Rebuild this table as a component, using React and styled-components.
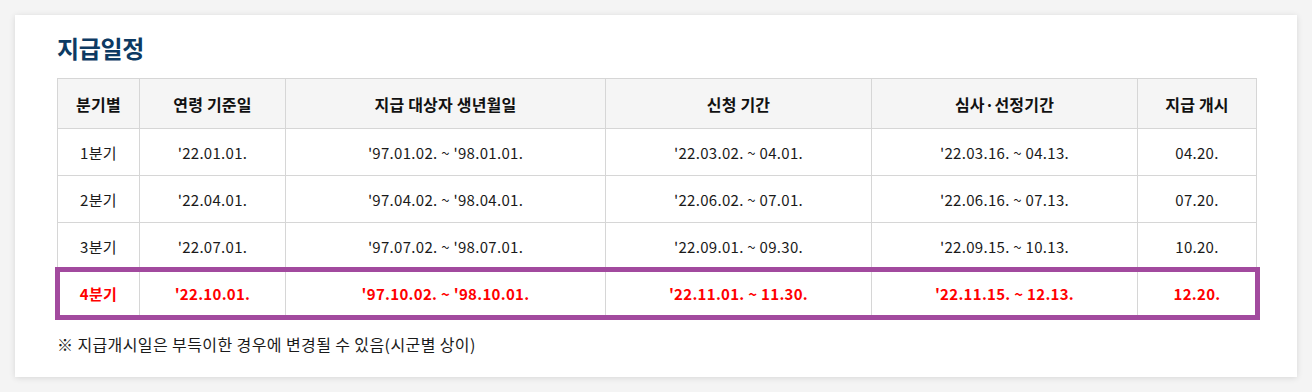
import React from "react";
import styled, { createGlobalStyle } from "styled-components";

const GlobalStyle = createGlobalStyle`
  html, body {
    margin: 0;
    padding: 0;
    background: #f4f4f4;
    font-family: "Noto Sans CJK KR", "Noto Sans", sans-serif;
  }
`;

const rows = [
  ["1분기", "'22.01.01.", "'97.01.02. ~ '98.01.01.", "'22.03.02. ~ 04.01.", "'22.03.16. ~ 04.13.", "04.20."],
  ["2분기", "'22.04.01.", "'97.04.02. ~ '98.04.01.", "'22.06.02. ~ 07.01.", "'22.06.16. ~ 07.13.", "07.20."],
  ["3분기", "'22.07.01.", "'97.07.02. ~ '98.07.01.", "'22.09.01. ~ 09.30.", "'22.09.15. ~ 10.13.", "10.20."],
  ["4분기", "'22.10.01.", "'97.10.02. ~ '98.10.01.", "'22.11.01. ~ 11.30.", "'22.11.15. ~ 12.13.", "12.20."],
];

const heads = ["분기별", "연령 기준일", "지급 대상자 생년월일", "신청 기간", "심사·선정기간", "지급 개시"];
const widths = [82, 146, 320, 266, 266, 119];

export default function App() {
  return (
    <>
      <GlobalStyle />
      <Page>
        <Card>
          <Title>지급일정</Title>
          <Table>
            <colgroup>
              {widths.map((w, i) => (
                <col key={i} style={{ width: w }} />
              ))}
            </colgroup>
            <thead>
              <tr>
                {heads.map((h) => (
                  <Th key={h}>{h}</Th>
                ))}
              </tr>
            </thead>
            <tbody>
              {rows.map((r, i) => (
                <Row key={i} $current={i === 3}>
                  {r.map((c, j) => (
                    <Td key={j} $current={i === 3}>{c}</Td>
                  ))}
                </Row>
              ))}
            </tbody>
          </Table>
          <Note>※ 지급개시일은 부득이한 경우에 변경될 수 있음(시군별 상이)</Note>
        </Card>
      </Page>
    </>
  );
}

const Page = styled.div`
  padding: 15px;
  height: 392px;
  box-sizing: border-box;
`;

const Card = styled.div`
  background: #fff;
  height: 362px;
  box-sizing: border-box;
  padding: 13px 41px 0 42px;
  box-shadow: 0 1px 6px rgba(0, 0, 0, 0.12);
`;

const Title = styled.h2`
  margin: 0 0 11px;
  font-size: 24px;
  font-weight: 700;
  line-height: 39px;
  color: #0d3a63;
  letter-spacing: -0.3px;
`;

const Table = styled.table`
  width: 1200px;
  border-collapse: collapse;
  table-layout: fixed;
  font-size: 15px;
  letter-spacing: 0.3px;
  color: #1a1a1a;
`;

const Th = styled.th`
  height: 49px;
  padding: 0;
  background: #f5f5f5;
  border: 1px solid #d6d6d6;
  font-size: 16px;
  font-weight: 700;
  letter-spacing: 0.2px;
  color: #111;
  text-align: center;
`;

const Row = styled.tr`
  outline: ${(p) => (p.$current ? "5px solid #a24a9e" : "none")};
  outline-offset: -2px;
`;

const Td = styled.td`
  height: 46px;
  padding: 0;
  border: 1px solid #d6d6d6;
  text-align: center;
  color: ${(p) => (p.$current ? "#ff0000" : "#1a1a1a")};
  font-weight: ${(p) => (p.$current ? 700 : 400)};
`;

const Note = styled.p`
  margin: 15px 0 0;
  font-size: 16px;
  letter-spacing: 0.4px;
  color: #1a1a1a;
`;
